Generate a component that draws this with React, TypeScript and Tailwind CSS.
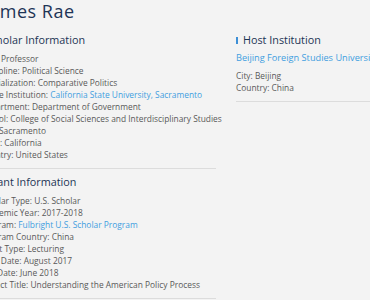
import React from "react";

type Row = { label: string; value: string; link?: boolean };

const scholar: Row[] = [
  { label: "Title", value: "Professor" },
  { label: "Discipline", value: "Political Science" },
  { label: "Specialization", value: "Comparative Politics" },
  { label: "Home Institution", value: "California State University, Sacramento", link: true },
  { label: "Department", value: "Department of Government" },
  { label: "School", value: "College of Social Sciences and Interdisciplinary Studies" },
  { label: "City", value: "Sacramento" },
  { label: "State", value: "California" },
  { label: "Country", value: "United States" },
];

const grant: Row[] = [
  { label: "Scholar Type", value: "U.S. Scholar" },
  { label: "Academic Year", value: "2017-2018" },
  { label: "Program", value: "Fulbright U.S. Scholar Program", link: true },
  { label: "Program Country", value: "China" },
  { label: "Grant Type", value: "Lecturing" },
  { label: "Start Date", value: "August 2017" },
  { label: "End Date", value: "June 2018" },
  { label: "Project Title", value: "Understanding the American Policy Process" },
];

function Heading({ children, shift }: { children: React.ReactNode; shift?: boolean }) {
  return (
    <h2
      className={
        "flex items-center gap-[5px] text-[10.8px] leading-[14px] text-[#1c3354] whitespace-nowrap " +
        (shift ? "ml-[-2px]" : "")
      }
    >
      <span className="w-[2px] h-[7px] bg-[#3d8fd6] shrink-0" />
      {children}
    </h2>
  );
}

function Rows({ rows }: { rows: Row[] }) {
  return (
    <ul className="mt-[6px] text-[8.4px] leading-[12px] text-[#595959] whitespace-nowrap">
      {rows.map((r) => (
        <li key={r.label}>
          {r.label}:{" "}
          {r.link ? <span className="text-[#3f9ee0]">{r.value}</span> : r.value}
        </li>
      ))}
    </ul>
  );
}

export default function App() {
  return (
    <div className="w-[370px] h-[300px] overflow-hidden bg-[#f3f3f3] font-['Open_Sans',sans-serif]">
      <div className="ml-[-20px] flex gap-[20px]">
        <div className="w-[236px] shrink-0">
          <h1 className="pt-[1px] pl-[4px] text-[18px] leading-[20px] tracking-[0.5px] text-[#1e3556] whitespace-nowrap">
            James Rae
          </h1>
          <section className="mt-[12px] pb-[7px] border-b border-[#dcdcdc]">
            <Heading shift>Scholar Information</Heading>
            <Rows rows={scholar} />
          </section>
          <section className="mt-[6px] pb-[7px] border-b border-[#dcdcdc]">
            <Heading shift>Grant Information</Heading>
            <Rows rows={grant} />
          </section>
        </div>
        <div className="w-[220px] shrink-0 pt-[33px]">
          <section className="pb-[7px] border-b border-[#dcdcdc]">
            <Heading>Host Institution</Heading>
            <div className="mt-[4px] text-[9.2px] leading-[14px] text-[#3f9ee0] whitespace-nowrap">
              Beijing Foreign Studies University
            </div>
            <ul className="mt-[5px] text-[8.4px] leading-[12px] text-[#595959] whitespace-nowrap">
              <li>City: Beijing</li>
              <li>Country: China</li>
            </ul>
          </section>
        </div>
      </div>
    </div>
  );
}
